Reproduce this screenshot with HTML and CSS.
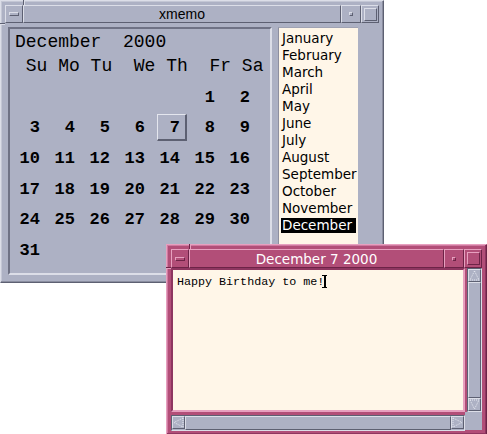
FILE: index.html
```html
<!DOCTYPE html>
<html lang="en">
<head>
    <meta charset="UTF-8">
    <title>xmemo</title>
    <link rel="stylesheet" href="styles.css">
</head>
<body>
    <div class="desk">
        <!-- calendar window -->
        <div class="win win-main">
            <div class="titlebar">
                <span class="tb-btn tb-min"><i></i></span>
                <span class="tb-title">xmemo</span>
                <span class="tb-btn tb-menu"><i></i></span>
                <span class="tb-btn tb-max"><i></i></span>
            </div>
            <div class="client">
                <div class="calendar">
                    <div class="cal-line">December  2000</div>
                    <div class="cal-line"> Su Mo Tu  We Th  Fr Sa</div>
                    <div class="cal-grid" id="grid"></div>
                </div>
                <ul class="months">
                    <li><span>January</span></li>
                    <li><span>February</span></li>
                    <li><span>March</span></li>
                    <li><span>April</span></li>
                    <li><span>May</span></li>
                    <li><span>June</span></li>
                    <li><span>July</span></li>
                    <li><span>August</span></li>
                    <li><span>September</span></li>
                    <li><span>October</span></li>
                    <li><span>November</span></li>
                    <li class="sel"><span>December</span></li>
                </ul>
            </div>
        </div>

        <!-- memo window -->
        <div class="win win-note">
            <div class="titlebar">
                <span class="tb-btn tb-min"><i></i></span>
                <span class="tb-title">December 7 2000</span>
                <span class="tb-btn tb-menu"><i></i></span>
                <span class="tb-btn tb-max"><i></i></span>
            </div>
            <div class="note-client">
                <div class="note-text">Happy Birthday to me!<span class="caret"></span></div>
                <div class="vscroll">
                    <span class="arrow"><svg width="11" height="11" viewBox="0 0 11 11"><path d="M5.5 1 L10 10 L1 10 Z" fill="none" stroke="#e8eaf2" stroke-dasharray="1 1"/></svg></span>
                    <span class="slider"></span>
                    <span class="arrow"><svg width="11" height="11" viewBox="0 0 11 11"><path d="M1 1 L10 1 L5.5 10 Z" fill="none" stroke="#e8eaf2" stroke-dasharray="1 1"/></svg></span>
                </div>
                <div class="hscroll">
                    <span class="arrow"><svg width="11" height="11" viewBox="0 0 11 11"><path d="M10 1 L10 10 L1 5.5 Z" fill="none" stroke="#e8eaf2" stroke-dasharray="1 1"/></svg></span>
                    <span class="slider"></span>
                    <span class="arrow"><svg width="11" height="11" viewBox="0 0 11 11"><path d="M1 1 L10 5.5 L1 10 Z" fill="none" stroke="#e8eaf2" stroke-dasharray="1 1"/></svg></span>
                </div>
                <div class="corner"></div>
            </div>
        </div>
    </div>

    <script>
        // December 2000 starts on a Friday
        const grid = document.getElementById('grid');
        const today = 7;
        for (let d = 1; d <= 31; d++) {
            const cell = document.createElement('div');
            cell.className = 'day';
            if (d === 1) cell.style.gridColumnStart = 6;
            const num = document.createElement('span');
            num.textContent = d;
            if (d === today) num.className = 'today';
            cell.appendChild(num);
            grid.appendChild(cell);
        }
    </script>
</body>
</html>
```

FILE: styles.css
```css
* {
    box-sizing: border-box;
    margin: 0;
    padding: 0;
}

body {
    background: #ffffff;
    width: 487px;
    height: 434px;
    overflow: hidden;
}

.desk {
    position: relative;
    width: 487px;
    height: 434px;
}

/* window frames */
.win {
    position: absolute;
    display: flex;
    flex-direction: column;
    border: 1px solid;
    padding: 4px;
}

.win-main {
    left: 0;
    top: 0;
    width: 384px;
    height: 283px;
    background: #adb1c4;
    border-color: #dcdee8 #5d6072 #5d6072 #dcdee8;
    box-shadow: inset -1px -1px 0 #8b8ea0, inset 1px 1px 0 #c4c7d5;
}

.win-note {
    left: 166px;
    top: 244px;
    width: 321px;
    height: 191px;
    background: #b24e78;
    border-color: #e7a0bf #6d2347 #6d2347 #e7a0bf;
    box-shadow: inset -1px -1px 0 #8e3660, inset 1px 1px 0 #cf7aa0;
}

/* resize-corner notches on the frame edges */
.win::before,
.win::after {
    content: "";
    position: absolute;
    pointer-events: none;
}

.win::before {
    left: 22px;
    top: -1px;
    width: 1px;
    height: 5px;
    background: #5d6072;
    box-shadow: 1px 0 0 #dcdee8;
}

.win::after {
    left: -1px;
    top: 22px;
    width: 5px;
    height: 1px;
    background: #5d6072;
    box-shadow: 0 1px 0 #dcdee8;
}

.win-note::before {
    background: #6d2347;
    box-shadow: 1px 0 0 #e7a0bf;
}

.win-note::after {
    background: #6d2347;
    box-shadow: 0 1px 0 #e7a0bf;
}

/* title bars */
.titlebar {
    display: flex;
    height: 18px;
    flex-shrink: 0;
}

.win-note .titlebar {
    height: 19px;
}

.tb-btn,
.tb-title {
    border: 1px solid;
    border-color: #dcdee8 #5d6072 #5d6072 #dcdee8;
    display: flex;
    align-items: center;
    justify-content: center;
}

.win-note .tb-btn,
.win-note .tb-title {
    border-color: #e7a0bf #6d2347 #6d2347 #e7a0bf;
}

.tb-btn {
    width: 18px;
    flex-shrink: 0;
}

.tb-menu {
    width: 20px;
}

.tb-title {
    flex: 1;
    font-family: "Liberation Sans", sans-serif;
    font-size: 14px;
    color: #000;
}

.win-note .tb-title {
    font-family: "DejaVu Sans", sans-serif;
    font-size: 13.5px;
    color: #ffffff;
}

.tb-min i {
    display: block;
    width: 10px;
    height: 4px;
    border: 1px solid;
    border-color: #dcdee8 #5d6072 #5d6072 #dcdee8;
}

.tb-menu i {
    display: block;
    width: 4px;
    height: 4px;
    border: 1px solid;
    border-color: #dcdee8 #5d6072 #5d6072 #dcdee8;
}

.tb-max i {
    display: block;
    width: 13px;
    height: 13px;
    border: 1px solid;
    border-color: #dcdee8 #5d6072 #5d6072 #dcdee8;
}

.win-note .tb-btn i {
    border-color: #e7a0bf #6d2347 #6d2347 #e7a0bf;
}

/* calendar window body */
.client {
    flex: 1;
    display: flex;
    gap: 6px;
    padding: 4px 0 3px 3px;
}

.calendar {
    width: 264px;
    border: 2px solid;
    border-color: #6f7285 #dcdee8 #dcdee8 #6f7285;
    padding-top: 1px;
    font-family: "Liberation Mono", monospace;
    color: #000;
}

.cal-line {
    font-size: 18px;
    line-height: 24px;
    padding-left: 5px;
    white-space: pre;
}

.cal-grid {
    display: grid;
    grid-template-columns: repeat(7, 35px);
    grid-auto-rows: 30.6px;
    margin-top: 4px;
}

.day {
    display: flex;
    align-items: center;
    justify-content: flex-end;
}

.day span {
    display: block;
    width: 30px;
    height: 27px;
    margin-right: -2px;
    padding-right: 6px;
    border: 1px solid transparent;
    text-align: right;
    font-size: 17px;
    font-weight: bold;
    line-height: 25px;
}

.day span.today {
    border-width: 1px 2px 2px 1px;
    border-color: #e4e6ee #5d6072 #5d6072 #e4e6ee;
    padding-right: 5px;
}

.months {
    list-style: none;
    width: 80px;
    margin-bottom: -20px;
    background: #fff6e8;
    border-left: 1px solid #8d8fa0;
    border-top: 1px solid #9fa2b3;
    padding: 2px 0 0 2px;
    font-family: "DejaVu Sans", sans-serif;
    font-size: 13.5px;
    color: #000;
}

.months li {
    padding: 1px 0;
}

.months span {
    display: block;
    width: 75px;
    line-height: 15px;
    padding-left: 1px;
    white-space: nowrap;
}

.months .sel span {
    background: #000;
    color: #fff;
}

/* memo window body */
.note-client {
    flex: 1;
    display: grid;
    grid-template-columns: 294px 17px;
    grid-template-rows: 144px 18px;
}

.note-text {
    background: #fff6e8;
    border: 2px solid;
    border-color: #8e3660 #e7a0bf #e7a0bf #8e3660;
    padding: 5px 4px;
    font-family: "Liberation Mono", monospace;
    font-size: 11.7px;
    line-height: 14px;
    color: #000;
}

.caret {
    display: inline-block;
    width: 5px;
    height: 13px;
    margin-left: -2px;
    vertical-align: -3px;
    border-top: 1px solid #000;
    border-bottom: 1px solid #000;
    background: linear-gradient(#000, #000) center / 2px 100% no-repeat;
}

.vscroll,
.hscroll {
    display: flex;
    background: #adb1c4;
    border: 1px solid;
    border-color: #5d6072 #dcdee8 #dcdee8 #5d6072;
}

.vscroll {
    flex-direction: column;
    margin-left: 2px;
}

.hscroll {
    margin-top: 3px;
    margin-bottom: -1px;
}

.arrow {
    width: 13px;
    height: 13px;
    flex-shrink: 0;
    display: flex;
    align-items: center;
    justify-content: center;
    border: 1px solid;
    border-color: #dcdee8 #5d6072 #5d6072 #dcdee8;
}

.slider {
    flex: 1;
    border: 1px solid;
    border-color: #dcdee8 #5d6072 #5d6072 #dcdee8;
}

.corner {
    background: #adb1c4;
}
```
